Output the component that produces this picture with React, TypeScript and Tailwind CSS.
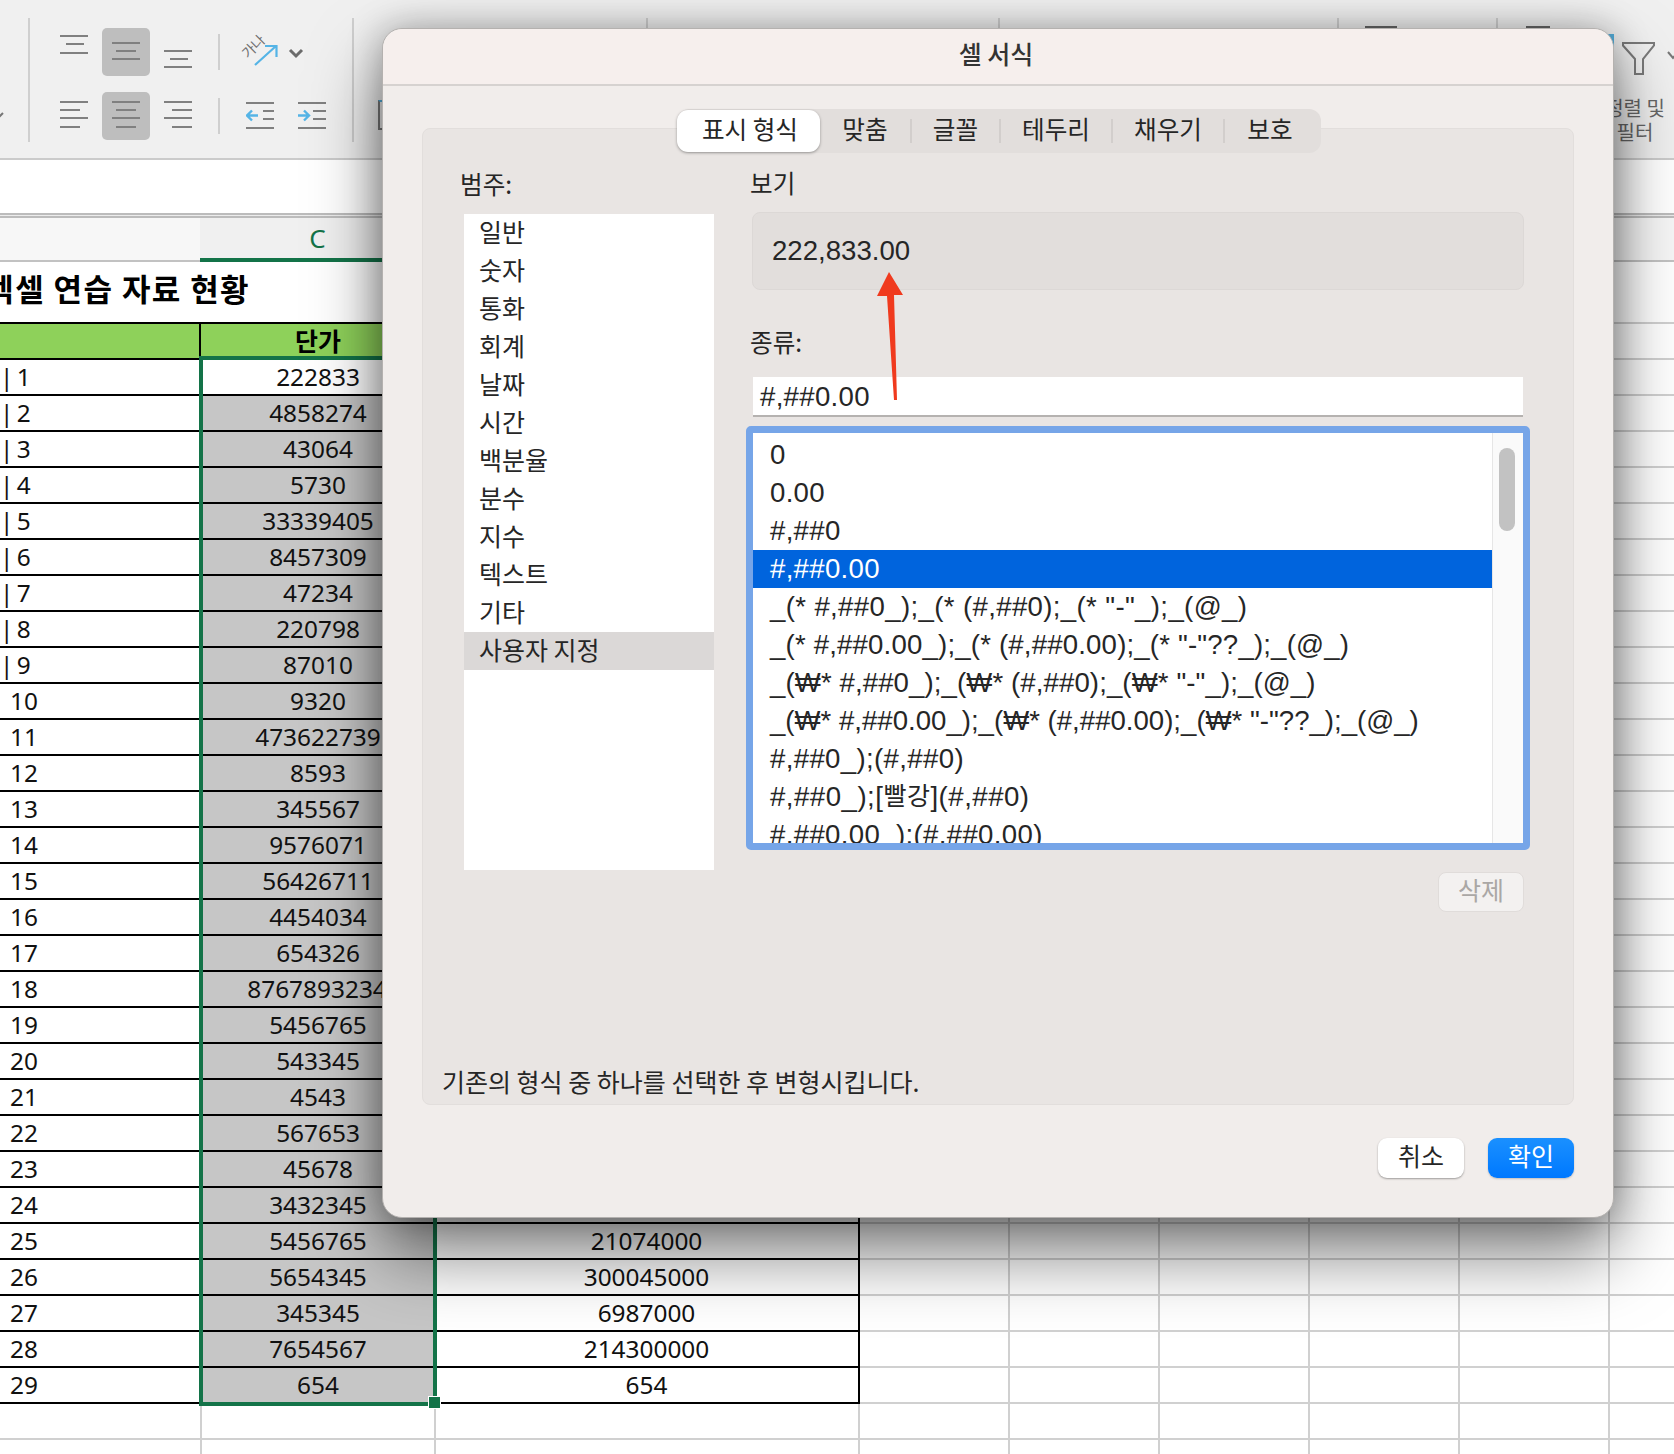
import React from "react";

const cjk = "[font-family:'Noto_Sans_CJK_KR',sans-serif]";
const cVals = ["222833","4858274","43064","5730","33339405","8457309","47234","220798","87010","9320","473622739","8593","345567","9576071","56426711","4454034","654326","87678932345","5456765","543345","4543","567653","45678","3432345","5456765","5654345","345345","7654567","654"];
const dVals: Record<number, string> = { 24: "21074000", 25: "300045000", 26: "6987000", 27: "214300000", 28: "654" };
const extra = [0, 1, 2, 3, 4];

function Lines({ lines }: { lines: number[][] }) {
  return (
    <svg width="48" height="48" viewBox="0 0 48 48">
      {lines.map((l, i) => (
        <line key={i} x1={l[0]} x2={l[1]} y1={l[2]} y2={l[2]} stroke="#808080" strokeWidth="2" />
      ))}
    </svg>
  );
}

function AlignCell({ active, lines }: { active?: boolean; lines: number[][] }) {
  return (
    <div className={active ? "h-12 w-12 rounded-[5px] bg-[#bebebe]" : "h-12 w-12"}>
      <Lines lines={lines} />
    </div>
  );
}

function Indent({ dir }: { dir: "l" | "r" }) {
  const short = dir === "l" ? [17, 28] : [15, 28];
  return (
    <svg width="28" height="28" viewBox="0 0 28 28">
      <line x1="0" x2="28" y1="1" y2="1" stroke="#808080" strokeWidth="2" />
      <line x1={short[0]} x2={short[1]} y1="9" y2="9" stroke="#808080" strokeWidth="2" />
      <line x1={short[0]} x2={short[1]} y1="17" y2="17" stroke="#808080" strokeWidth="2" />
      <line x1="0" x2="28" y1="26" y2="26" stroke="#808080" strokeWidth="2" />
      {dir === "l" ? (
        <path d="M12 13.5H1M6 8.5L1 13.5L6 18.5" fill="none" stroke="#55b4e6" strokeWidth="2.4" />
      ) : (
        <path d="M0 13.5H11M6 8.5L11 13.5L6 18.5" fill="none" stroke="#55b4e6" strokeWidth="2.4" />
      )}
    </svg>
  );
}

function Ribbon() {
  return (
    <div className="flex h-[160px] shrink-0 items-start overflow-hidden border-b-2 border-[#cbcbcb] bg-[#f0f0f0] pt-[18px]">
      <svg className="mt-[94px] shrink-0" width="4" height="6" viewBox="0 0 4 6">
        <path d="M-3 1L0 4L3 1" fill="none" stroke="#777" strokeWidth="2" />
      </svg>
      <div className="ml-[24px] h-[124px] w-[2px] bg-[#cfcfcf]" />
      <div className="ml-[20px] mt-[10px] grid grid-cols-[48px_48px_48px] gap-x-[4px] gap-y-[16px]">
        <AlignCell lines={[[10, 38, 8], [16, 34, 16], [10, 38, 25]]} />
        <AlignCell active lines={[[10, 38, 15], [14, 34, 23], [10, 38, 31]]} />
        <AlignCell lines={[[10, 38, 23], [16, 34, 31], [10, 38, 39]]} />
        <AlignCell lines={[[10, 38, 10], [10, 30, 18], [10, 38, 26], [10, 30, 35]]} />
        <AlignCell active lines={[[10, 38, 10], [14, 34, 18], [10, 38, 26], [14, 34, 35]]} />
        <AlignCell lines={[[10, 38, 10], [18, 38, 18], [10, 38, 26], [18, 38, 35]]} />
      </div>
      <div className="ml-[16px] mt-[16px] flex flex-col gap-[28px]">
        <div className="h-[36px] w-[2px] bg-[#cfcfcf]" />
        <div className="h-[36px] w-[2px] bg-[#cfcfcf]" />
      </div>
      <div className="ml-[20px] flex w-[110px] flex-col">
        <div className="relative flex h-[62px] items-end pb-[11px]">
          <span className={`absolute left-0 top-[21px] -rotate-45 text-[14px] leading-none text-[#6e6e6e] ${cjk}`}>가나</span>
          <svg width="66" height="34" viewBox="0 0 66 34">
            <path d="M15 30L36 11M25 11H36.5V22" fill="none" stroke="#55b4e6" strokeWidth="2.2" />
            <path d="M50 15L56 21L62 15" fill="none" stroke="#6b6b6b" strokeWidth="3" />
          </svg>
        </div>
        <div className="ml-[6px] mt-[22px] flex gap-[24px]">
          <Indent dir="l" />
          <Indent dir="r" />
        </div>
      </div>
      <div className="ml-[2px] h-[124px] w-[2px] bg-[#cfcfcf]" />
      <div className="ml-[24px] mt-[82px] h-[30px] w-[10px] border-2 border-[#7a7a7a] border-t-[#55b0dd]" />
      <div className="ml-[258px] h-[10px] w-[2px] bg-[#cfcfcf]" />
      <div className="ml-[350px] h-[10px] w-[2px] bg-[#cfcfcf]" />
      <div className="ml-[337px] h-[10px] w-[2px] bg-[#cfcfcf]" />
      <div className="ml-[26px] mt-[8px] h-[2px] w-[32px] bg-[#666]" />
      <div className="ml-[99px] h-[10px] w-[2px] bg-[#cfcfcf]" />
      <div className="ml-[28px] mt-[8px] h-[2px] w-[24px] bg-[#666]" />
      <div className="ml-[55px] mt-[16px] h-[16px] w-[9px] bg-[#55b0dd]" />
      <div className="relative ml-[4px] flex w-[54px] shrink-0 flex-col items-center">
        <svg className="absolute left-[4px] top-[24px]" width="54" height="34" viewBox="0 0 54 34">
          <path d="M1 1H32V3.5L21 17V32H13V17L1 3.5Z" fill="none" stroke="#7a7a7a" strokeWidth="2" />
          <path d="M46 10L51 16L56 10" fill="none" stroke="#777" strokeWidth="2" />
        </svg>
        <div className={`mt-[78px] w-[80px] text-center text-[20px] leading-[24px] text-[#666] ${cjk} -ml-[20px] whitespace-nowrap`}>
          정렬 및
          <br />
          필터
        </div>
      </div>
    </div>
  );
}

function BlankCells() {
  return (
    <>
      {extra.map((n) => (
        <div key={n} className="h-full w-[150px] shrink-0 border-b-2 border-r-2 border-[#d0d0d0]" />
      ))}
      <div className="h-full flex-1 border-b-2 border-[#d0d0d0]" />
    </>
  );
}

function Sheet() {
  const num = "[font-family:'Noto_Sans','Noto_Sans_CJK_KR',sans-serif] text-[24.4px] leading-none text-[#111]";
  return (
    <div className="flex flex-1 flex-col overflow-hidden bg-white">
      <div className="h-[53px] shrink-0 bg-white" />
      <div className="h-[5px] shrink-0 border-y-2 border-[#bcbcbc] bg-[#ececec]" />
      <div className="flex h-[44px] shrink-0">
        <div className="h-full w-[200px] border-b-2 border-[#c2c2c2] bg-[#f7f7f7]" />
        <div className={`flex h-full w-[235px] items-center justify-center border-b-4 border-[#137348] bg-[#f0f0f0] [font-family:'Noto_Sans',sans-serif] text-[26px] text-[#137348]`}>C</div>
        <div className="h-full flex-1 border-b-2 border-[#c2c2c2] bg-[#f7f7f7]" />
      </div>
      <div className="flex h-[60px] shrink-0">
        <div className={`flex w-[250px] shrink-0 items-center justify-end overflow-hidden whitespace-nowrap pb-[8px] text-[31px] font-bold tracking-[1.4px] text-black ${cjk}`}>
          엑셀 연습 자료 현황
        </div>
      </div>
      <div className={`flex h-[38px] shrink-0 border-[#d0d0d0]`}>
        <div className="h-full w-[201px] shrink-0 border-y-2 border-r-2 border-black bg-[#8ed15a]" />
        <div className={`flex h-full w-[234px] shrink-0 items-center justify-center border-y-2 border-black bg-[#8ed15a] text-[25px] font-bold text-black ${cjk}`}>단가</div>
        <div className="h-full w-[425px] shrink-0 border-y-2 border-r-2 border-black bg-[#8ed15a]" />
        <div className="h-full flex-1 border-y-2 border-[#d0d0d0]" />
      </div>
      <div className="relative shrink-0">
        {cVals.map((v, i) => (
          <div key={i} className="flex h-[36px]">
            <div className={`flex h-full w-[201px] shrink-0 items-center whitespace-nowrap border-b-2 border-black ${i < 9 ? "pl-0 [word-spacing:-3px]" : "pl-[10px]"} ${num}`}>
              {i < 9 ? `| ${i + 1}` : i + 1}
            </div>
            <div className={`flex h-full w-[234px] shrink-0 items-center justify-center whitespace-nowrap border-b-2 border-black ${i === 0 ? "bg-white" : "bg-[#c6c6c6]"} ${i === 17 ? "pl-[12px]" : ""} ${num}`}>
              {v}
            </div>
            <div className={`flex h-full w-[425px] shrink-0 items-center justify-center border-b-2 border-r-2 border-black ${num}`}>{dVals[i]}</div>
            <BlankCells />
          </div>
        ))}
        {[0, 1].map((n) => (
          <div key={n} className="flex h-[36px]">
            <div className="h-full w-[202px] shrink-0 border-b-2 border-r-2 border-[#d0d0d0]" />
            <div className="h-full w-[234px] shrink-0 border-b-2 border-r-2 border-[#d0d0d0]" />
            <div className="h-full w-[424px] shrink-0 border-b-2 border-r-2 border-[#d0d0d0]" />
            <BlankCells />
          </div>
        ))}
        <div className="absolute -top-[4px] left-[199px] h-[1050px] w-[238px] border-4 border-[#137348]">
          <div className="absolute -bottom-[6px] -right-[7px] h-[11px] w-[11px] bg-[#137348] outline-1 outline-white" />
        </div>
      </div>
    </div>
  );
}

const categories = ["일반", "숫자", "통화", "회계", "날짜", "시간", "백분율", "분수", "지수", "텍스트", "기타", "사용자 지정"];
const tabs = [
  { t: "맞춤", w: "w-[92px]" },
  { t: "글꼴", w: "w-[89px]" },
  { t: "테두리", w: "w-[112px]" },
  { t: "채우기", w: "w-[112px]" },
  { t: "보호", w: "w-[90px]" },
];
const H = ({ children }: { children: React.ReactNode }) => <span className="text-[25px]">{children}</span>;
const formats: { c: string; f: React.ReactNode }[] = [
  { c: "tracking-[0.3px]", f: "0" },
  { c: "tracking-[0.3px]", f: "0.00" },
  { c: "tracking-[0.3px]", f: "#,##0" },
  { c: "tracking-[0.3px] bg-[#0064dd] !text-white", f: "#,##0.00" },
  { c: "tracking-[0.36px]", f: '_(* #,##0_);_(* (#,##0);_(* "-"_);_(@_)' },
  { c: "tracking-[0.18px]", f: '_(* #,##0.00_);_(* (#,##0.00);_(* "-"??_);_(@_)' },
  { c: "tracking-[0.1px]", f: '_(₩* #,##0_);_(₩* (#,##0);_(₩* "-"_);_(@_)' },
  { c: "", f: '_(₩* #,##0.00_);_(₩* (#,##0.00);_(₩* "-"??_);_(@_)' },
  { c: "tracking-[0.35px]", f: "#,##0_);(#,##0)" },
  { c: "tracking-[0.5px]", f: <>#,##0_);[<H>빨강</H>](#,##0)</> },
  { c: "tracking-[0.35px]", f: "#,##0.00_);(#,##0.00)" },
];

function Dialog() {
  const latin = "[font-family:'Liberation_Sans','Noto_Sans_CJK_KR',sans-serif] text-[27.6px] text-[#262626]";
  return (
    <div className={`absolute left-[382px] top-[28px] flex h-[1190px] w-[1232px] flex-col rounded-[20px] border border-[#b4b1af] bg-[#f1edeb] shadow-[0_36px_70px_rgba(0,0,0,0.5),0_0_36px_rgba(0,0,0,0.28)] ${cjk}`}>
      <div className="flex h-[57px] shrink-0 items-center justify-center rounded-t-[20px] border-b-2 border-[#d6d2d0] bg-[#f6efed] pb-[6px] pr-[4px] text-[25px] font-medium text-[#333]">
        셀 서식
      </div>
      <div className="relative mx-[39px] mt-[42px] flex h-[977px] flex-col rounded-[8px] border border-[#e2dedc] bg-[#e9e5e3]">
        <div className="absolute -top-[20px] left-[254px] flex h-[44px] w-[644px] items-center rounded-[12px] bg-[#e2dedc] text-[24.6px] leading-none text-[#262626]">
          <div className="flex h-[42px] w-[143px] items-center justify-center rounded-[11px] bg-white pb-[6px] pl-[3px] shadow-[0_1px_3px_rgba(0,0,0,0.35)]">표시 형식</div>
          {tabs.map((tab, i) => (
            <div key={tab.t} className={`flex h-[24px] items-center justify-center pb-[6px] ${tab.w} ${i < 4 ? "border-r-2 border-[#d2cecc]" : ""}`}>
              {tab.t}
            </div>
          ))}
        </div>
        <div className="flex pt-[39px]">
          <div className="ml-[38px] flex w-[253px] shrink-0 flex-col">
            <div className="-ml-[1px] h-[32px] text-[24.6px] leading-[30px] text-[#262626]">범주:</div>
            <div className="ml-[3px] mt-[14px] h-[656px] w-[250px] bg-white">
              {categories.map((c, i) => (
                <div key={c} className={`flex h-[38px] items-center pb-[3px] pl-[15px] text-[25px] text-[#262626] ${i === 11 ? "bg-[#dbd8d7]" : ""}`}>
                  {c}
                </div>
              ))}
            </div>
          </div>
          <div className="relative ml-[36px] flex w-[784px] flex-col">
            <div className="h-[32px] text-[24.6px] leading-[28px] text-[#262626]">보기</div>
            <div className={`ml-[2px] mt-[12px] flex h-[78px] w-[772px] items-center rounded-[8px] border border-[#dcd8d6] bg-[#e2dedc] pl-[19px] ${latin}`}>222,833.00</div>
            <div className="mt-[37px] h-[32px] text-[24.6px] leading-[28px] text-[#262626]">종류:</div>
            <div className={`ml-[3px] mt-[18px] flex h-[40px] w-[770px] items-center border-b-2 border-[#b5b2b0] bg-white pl-[7px] pt-[2px] tracking-[0.3px] ${latin}`}>#,##0.00</div>
            <div className="-ml-[4px] mt-[9px] flex h-[424px] w-[784px] overflow-hidden rounded-[5px] border-[7px] border-[#76a5e8] bg-white">
              <div className="flex-1 overflow-hidden pt-[3px]">
                {formats.map((row, i) => (
                  <div key={i} className={`flex h-[38px] items-center whitespace-nowrap pl-[17px] ${latin} ${row.c}`}>
                    {row.f}
                  </div>
                ))}
              </div>
              <div className="w-[31px] shrink-0 border-l border-[#e6e6e6] bg-[#fafafa] pl-[6px] pt-[15px]">
                <div className="h-[83px] w-[16px] rounded-full bg-[#c2c2c2]" />
              </div>
            </div>
            <div className="ml-[688px] mt-[22px] flex h-[40px] w-[86px] items-center justify-center rounded-[8px] border border-[#e0dcda] bg-[#f3f1f0] pb-[6px] text-[25px] leading-none text-[#aaa7a5]">
              삭제
            </div>
            <svg className="absolute left-[124px] top-[102px]" width="40" height="134" viewBox="0 0 40 134">
              <path d="M15 2L29 25H20L23 130L20 130L13 26H3Z" fill="#f03a1e" />
            </svg>
          </div>
        </div>
        <div className="mt-auto pb-[7px] pl-[19px] text-[25px] leading-[32px] text-[#262626]">기존의 형식 중 하나를 선택한 후 변형시킵니다.</div>
      </div>
      <div className="mr-[39px] mt-[33px] flex justify-end gap-[24px] text-[25px] leading-none">
        <div className="flex h-[40px] w-[86px] items-center justify-center rounded-[9px] bg-white pb-[5px] text-[#262626] shadow-[0_1px_2px_rgba(0,0,0,0.35)]">취소</div>
        <div className="flex h-[40px] w-[86px] items-center justify-center rounded-[9px] bg-gradient-to-b from-[#1a90ff] to-[#0078ff] pb-[5px] text-white shadow-[0_1px_2px_rgba(0,0,0,0.2)]">확인</div>
      </div>
    </div>
  );
}

export default function App() {
  return (
    <div className="relative flex h-[1454px] w-[1674px] flex-col overflow-hidden bg-white">
      <Ribbon />
      <Sheet />
      <Dialog />
    </div>
  );
}
